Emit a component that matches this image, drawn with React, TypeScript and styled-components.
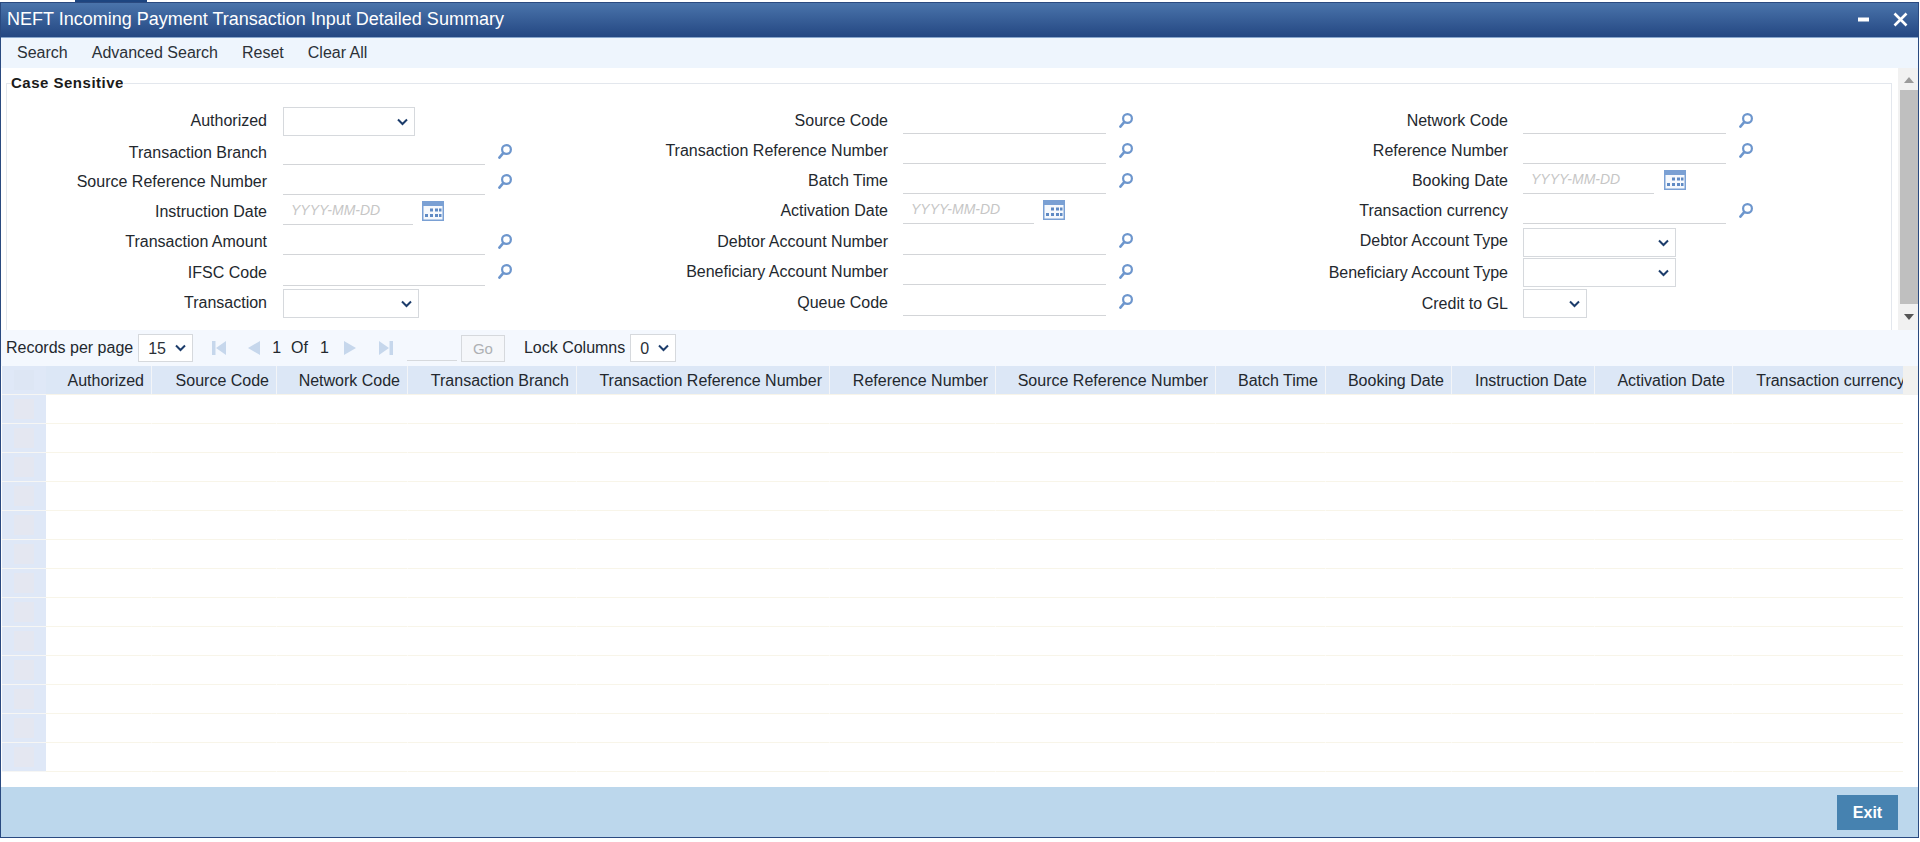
import React from "react";
import styled, { createGlobalStyle } from "styled-components";

const Global = createGlobalStyle`
  * { box-sizing: border-box; }
  html, body { margin: 0; padding: 0; background: #fff; overflow: hidden; }
  body { font-family: "Liberation Sans", Arial, sans-serif; font-size: 16px; color: #222; }
`;

const Page = styled.div`
  width: 1920px;
  height: 842px;
  display: flex;
  flex-direction: column;
`;
const TopStrip = styled.div`
  height: 2px;
  padding-left: 75px;
`;
const TopTab = styled.div`
  width: 72px;
  height: 3px;
  background: #1d4580;
`;
const Win = styled.div`
  width: 1919px;
  height: 836px;
  border: 1px solid #2a4a80;
  display: flex;
  flex-direction: column;
`;
const TitleBar = styled.div`
  height: 35px;
  flex: none;
  display: flex;
  align-items: center;
  padding: 0 10px 1px 6px;
  color: #fff;
  border-bottom: 1px solid #88a6cc;
  background: linear-gradient(#4a74ab, #244782);
`;
const Title = styled.div`
  flex: 1;
  font-size: 18px;
`;
const WinIcon = styled.svg`
  display: block;
  margin-left: 24px;
`;
const Toolbar = styled.div`
  height: 30px;
  flex: none;
  display: flex;
  align-items: center;
  gap: 24px;
  padding-left: 16px;
  background: #eef5fd;
`;
const ToolButton = styled.button`
  border: 0;
  padding: 0;
  background: none;
  font: 16px "Liberation Sans", Arial, sans-serif;
  color: #2b3138;
`;
const FormArea = styled.div`
  height: 262px;
  flex: none;
  display: flex;
  padding-left: 5px;
  background: #fff;
`;
const Fieldset = styled.fieldset`
  width: 1886px;
  min-width: 0;
  height: 256px;
  margin: 6px 0 0 0;
  padding: 0;
  border: 1px solid #e3e7ed;
  border-bottom: 0;
`;
const Legend = styled.legend`
  margin-left: 4px;
  padding: 0;
  font-size: 15px;
  font-weight: 700;
  line-height: 18px;
  letter-spacing: 0.5px;
  color: #1b1b1b;
`;
const Columns = styled.div`
  display: grid;
  grid-template-columns: repeat(3, 620px);
  padding-left: 10px;
`;
const Column = styled.div<{ $top: number }>`
  padding-top: ${(p) => p.$top}px;
`;
const Row = styled.div<{ $h: number }>`
  height: ${(p) => p.$h}px;
  display: flex;
  align-items: center;
`;
const Label = styled.label<{ $low?: boolean; $gap: number }>`
  width: ${(p) => 266 - p.$gap}px;
  flex: none;
  margin-right: ${(p) => p.$gap}px;
  text-align: right;
  color: #23282e;
  padding-top: ${(p) => (p.$low ? 4 : 0)}px;
`;
const TextField = styled.input<{ $w: number }>`
  width: ${(p) => p.$w}px;
  height: 29px;
  align-self: flex-end;
  flex: none;
  border: 0;
  border-bottom: 1px solid #d3d5d8;
  padding: 0 0 1px 8px;
  outline: 0;
  background: #fff;
  font: italic 14px "Liberation Sans", Arial, sans-serif;
  &::placeholder {
    color: #c6c6c6;
    opacity: 1;
  }
`;
const SelectWrap = styled.div<{ $w: number; $mb?: number }>`
  position: relative;
  width: ${(p) => p.$w}px;
  height: 29px;
  flex: none;
  align-self: flex-end;
  margin-bottom: ${(p) => p.$mb ?? 0}px;
`;
const NativeSelect = styled.select`
  width: 100%;
  height: 100%;
  appearance: none;
  background: #fff;
  border: 1px solid #d6d9dd;
  border-radius: 0;
  padding: 0 0 0 9px;
  font: 16px "Liberation Sans", Arial, sans-serif;
  color: #2a3037;
  outline: 0;
`;
const Chevron = styled.svg`
  position: absolute;
  right: 7px;
  top: 50%;
  margin-top: -4px;
  pointer-events: none;
`;
const Lookup = styled.svg`
  flex: none;
  margin: 2px 0 0 13px;
`;
const Calendar = styled.svg<{ $ml: number }>`
  flex: none;
  margin: 2px 0 0 ${(p) => p.$ml}px;
`;
const ScrollBar = styled.div`
  width: 20px;
  margin-left: 6px;
  background: #f1f1f1;
  display: flex;
  flex-direction: column;
  align-items: flex-end;
`;
const ScrollArrow = styled.svg`
  flex: none;
  width: 18px;
  height: 22px;
`;
const ScrollThumb = styled.div`
  width: 18px;
  height: 214px;
  background: #bfbfbf;
`;
const Pager = styled.div`
  height: 36px;
  flex: none;
  display: flex;
  align-items: center;
  padding-left: 5px;
  background: #f4f8fe;
  color: #23282e;
`;
const PagerText = styled.span<{ $ml?: number }>`
  margin-left: ${(p) => p.$ml ?? 0}px;
`;
const NavIcon = styled.svg<{ $ml: number }>`
  flex: none;
  margin-left: ${(p) => p.$ml}px;
`;
const PageInput = styled.input`
  width: 50px;
  height: 26px;
  margin: 0 0 0 14px;
  border: 0;
  border-bottom: 1px solid #d6d9dd;
  background: transparent;
  outline: 0;
`;
const GoButton = styled.button`
  width: 44px;
  height: 27px;
  margin-left: 4px;
  padding: 0;
  border: 1px solid #d6d9dd;
  background: #f5f7fa;
  color: #aeb0b3;
  font: 15px "Liberation Sans", Arial, sans-serif;
`;
const PagerSelect = styled.div<{ $w: number; $ml: number }>`
  position: relative;
  width: ${(p) => p.$w}px;
  height: 28px;
  flex: none;
  margin-left: ${(p) => p.$ml}px;
`;
const Table = styled.div`
  flex: 1;
  min-height: 0;
  background: #fff;
  padding-left: 1px;
`;
const HeadLine = styled.div`
  display: flex;
  height: 29px;
`;
const GridRow = styled.div`
  width: 1901px;
  flex: none;
  display: flex;
  overflow: hidden;
`;
const Track = styled.div`
  flex: 1;
  background: #f1f1ef;
`;
const Stub = styled.div<{ $head?: boolean }>`
  width: 44px;
  height: 29px;
  flex: none;
  display: flex;
  align-items: center;
  justify-content: center;
  background: #dfe8f7;
  border-bottom: 1px solid #f6f6f4;
  &::after {
    content: "";
    width: 20px;
    height: 20px;
    background: ${(p) => (p.$head ? "#dde6f4" : "#e4e7f1")};
  }
`;
const HeadCell = styled.div<{ $w: number }>`
  width: ${(p) => p.$w}px;
  height: 29px;
  flex: none;
  padding: 2px 7px 0 0;
  display: flex;
  align-items: center;
  justify-content: flex-end;
  white-space: nowrap;
  background: #dce7f6;
  border-right: 1px solid #f3f5f8;
  border-bottom: 1px solid #f7f4ea;
  color: #23282e;
`;
const BodyCell = styled.div<{ $w: number }>`
  width: ${(p) => p.$w}px;
  height: 29px;
  flex: none;
  border-right: 1px solid #fff;
  border-bottom: 1px solid #f8f5e9;
`;
const Footer = styled.div`
  height: 50px;
  flex: none;
  display: flex;
  justify-content: flex-end;
  padding: 8px 20px 0 0;
  background: #bcd7ec;
`;
const ExitButton = styled.button`
  width: 61px;
  height: 35px;
  padding: 0;
  border: 0;
  background: #4682b0;
  color: #fff;
  font: 700 16px "Liberation Sans", Arial, sans-serif;
`;

const ChevronIcon = () => (
  <Chevron width="11" height="8" viewBox="0 0 11 8">
    <path d="M1 1.5l4.5 4.5L10 1.5" fill="none" stroke="#1c3c6b" strokeWidth="2" />
  </Chevron>
);
const LookupIcon = () => (
  <Lookup width="14" height="15" viewBox="0 0 14 15">
    <circle cx="8.5" cy="5.5" r="4.4" fill="none" stroke="#6d96cd" strokeWidth="2.2" />
    <path d="M5.2 9.2L1.4 13.6" fill="none" stroke="#6d96cd" strokeWidth="2.6" strokeLinecap="round" />
  </Lookup>
);
const CalendarIcon = ({ ml }: { ml: number }) => (
  <Calendar $ml={ml} width="22" height="20" viewBox="0 0 22 20">
    <rect x="0" y="0" width="22" height="20" fill="#7aa0d4" />
    <rect x="1.5" y="5" width="19" height="13.5" fill="#f6f9fd" />
    <g fill="#5f8ac4">
      <rect x="8" y="7.5" width="3" height="3" />
      <rect x="13" y="7.5" width="3" height="3" />
      <rect x="17" y="7.5" width="2.5" height="3" />
      <rect x="3" y="13" width="3" height="3" />
      <rect x="8" y="13" width="3" height="3" />
      <rect x="13" y="13" width="3" height="3" />
      <rect x="17" y="13" width="2.5" height="3" />
    </g>
  </Calendar>
);

type Field = { label: string; kind: "lookup" | "date" | "select"; w?: number; mb?: number };

const col1: Field[] = [
  { label: "Authorized", kind: "select", w: 132 },
  { label: "Transaction Branch", kind: "lookup" },
  { label: "Source Reference Number", kind: "lookup" },
  { label: "Instruction Date", kind: "date" },
  { label: "Transaction Amount", kind: "lookup" },
  { label: "IFSC Code", kind: "lookup" },
  { label: "Transaction", kind: "select", w: 136, mb: 1 },
];
const col2: Field[] = [
  { label: "Source Code", kind: "lookup" },
  { label: "Transaction Reference Number", kind: "lookup" },
  { label: "Batch Time", kind: "lookup" },
  { label: "Activation Date", kind: "date" },
  { label: "Debtor Account Number", kind: "lookup" },
  { label: "Beneficiary Account Number", kind: "lookup" },
  { label: "Queue Code", kind: "lookup" },
];
const col3: Field[] = [
  { label: "Network Code", kind: "lookup" },
  { label: "Reference Number", kind: "lookup" },
  { label: "Booking Date", kind: "date" },
  { label: "Transaction currency", kind: "lookup" },
  { label: "Debtor Account Type", kind: "select", w: 153, mb: 1 },
  { label: "Beneficiary Account Type", kind: "select", w: 153, mb: 1 },
  { label: "Credit to GL", kind: "select", w: 64, mb: 1 },
];

const formColumns = [
  { top: 13, gap: 16, input: 202, date: 130, calGap: 9, fields: col1, heights: [31, 29, 30, 30, 30, 31, 33] },
  { top: 12, gap: 15, input: 203, date: 131, calGap: 9, fields: col2, heights: [30, 30, 30, 30, 31, 30, 31] },
  { top: 12, gap: 15, input: 203, date: 131, calGap: 10, fields: col3, heights: [30, 30, 30, 30, 34, 30, 31] },
];

const gridColumns: [string, number][] = [
  ["Authorized", 106],
  ["Source Code", 125],
  ["Network Code", 131],
  ["Transaction Branch", 169],
  ["Transaction Reference Number", 253],
  ["Reference Number", 166],
  ["Source Reference Number", 220],
  ["Batch Time", 110],
  ["Booking Date", 126],
  ["Instruction Date", 143],
  ["Activation Date", 138],
  ["Transaction currency", 180],
];

type FieldProps = { f: Field; h: number; gap: number; input: number; date: number; calGap: number };

const FormField = ({ f, h, gap, input, date, calGap }: FieldProps) => (
  <Row $h={h}>
    <Label $low={f.kind !== "select"} $gap={gap}>
      {f.label}
    </Label>
    {f.kind === "select" && (
      <SelectWrap $w={f.w ?? 132} $mb={f.mb}>
        <NativeSelect aria-label={f.label}>
          <option></option>
        </NativeSelect>
        <ChevronIcon />
      </SelectWrap>
    )}
    {f.kind === "lookup" && (
      <>
        <TextField $w={input} aria-label={f.label} />
        <LookupIcon />
      </>
    )}
    {f.kind === "date" && (
      <>
        <TextField $w={date} placeholder="YYYY-MM-DD" aria-label={f.label} />
        <CalendarIcon ml={calGap} />
      </>
    )}
  </Row>
);

const navFill = "#c6d7ec";

export default function App() {
  return (
    <Page>
      <Global />
      <TopStrip>
        <TopTab />
      </TopStrip>
      <Win>
        <TitleBar>
          <Title>NEFT Incoming Payment Transaction Input Detailed Summary</Title>
          <WinIcon width="11" height="5" viewBox="0 0 11 5">
            <rect width="11" height="4" y="0.5" fill="#fff" />
          </WinIcon>
          <WinIcon width="15" height="15" viewBox="0 0 15 15">
            <path d="M1.5 1.5l12 12M13.5 1.5l-12 12" stroke="#fff" strokeWidth="2.6" fill="none" />
          </WinIcon>
        </TitleBar>
        <Toolbar>
          <ToolButton>Search</ToolButton>
          <ToolButton>Advanced Search</ToolButton>
          <ToolButton>Reset</ToolButton>
          <ToolButton>Clear All</ToolButton>
        </Toolbar>
        <FormArea>
          <Fieldset>
            <Legend>Case Sensitive</Legend>
            <Columns>
              {formColumns.map((c, i) => (
                <Column key={i} $top={c.top}>
                  {c.fields.map((f, j) => (
                    <FormField
                      key={f.label}
                      f={f}
                      h={c.heights[j]}
                      gap={c.gap}
                      input={c.input}
                      date={c.date}
                      calGap={c.calGap}
                    />
                  ))}
                </Column>
              ))}
            </Columns>
          </Fieldset>
          <ScrollBar>
            <ScrollArrow viewBox="0 0 18 22">
              <path d="M4 15l5-6 5 6z" fill="#9a9a9a" />
            </ScrollArrow>
            <ScrollThumb />
            <ScrollArrow viewBox="0 0 18 22">
              <path d="M4 10l5 6 5-6z" fill="#555" />
            </ScrollArrow>
          </ScrollBar>
        </FormArea>
        <Pager>
          <PagerText>Records per page</PagerText>
          <PagerSelect $w={55} $ml={5}>
            <NativeSelect aria-label="Records per page">
              <option>15</option>
            </NativeSelect>
            <ChevronIcon />
          </PagerSelect>
          <NavIcon $ml={19} width="14" height="14" viewBox="0 0 14 14">
            <path d="M0 0h3.5v14H0zM14 0v14L4 7z" fill={navFill} />
          </NavIcon>
          <NavIcon $ml={22} width="12" height="14" viewBox="0 0 12 14">
            <path d="M12 0v14L0 7z" fill={navFill} />
          </NavIcon>
          <PagerText $ml={12}>1</PagerText>
          <PagerText $ml={10}>Of</PagerText>
          <PagerText $ml={12}>1</PagerText>
          <NavIcon $ml={15} width="12" height="14" viewBox="0 0 12 14">
            <path d="M0 0v14L12 7z" fill={navFill} />
          </NavIcon>
          <NavIcon $ml={23} width="14" height="14" viewBox="0 0 14 14">
            <path d="M14 0h-3.5v14H14zM0 0v14L10 7z" fill={navFill} />
          </NavIcon>
          <PageInput aria-label="Page" />
          <GoButton>Go</GoButton>
          <PagerText $ml={19}>Lock Columns</PagerText>
          <PagerSelect $w={46} $ml={5}>
            <NativeSelect aria-label="Lock Columns">
              <option>0</option>
            </NativeSelect>
            <ChevronIcon />
          </PagerSelect>
        </Pager>
        <Table>
          <HeadLine>
            <GridRow>
              <Stub $head />
              {gridColumns.map(([name, w]) => (
                <HeadCell key={name} $w={w}>
                  {name}
                </HeadCell>
              ))}
            </GridRow>
            <Track />
          </HeadLine>
          {Array.from({ length: 13 }, (_, i) => (
            <GridRow key={i}>
              <Stub />
              {gridColumns.map(([name, w]) => (
                <BodyCell key={name} $w={w} />
              ))}
            </GridRow>
          ))}
        </Table>
        <Footer>
          <ExitButton>Exit</ExitButton>
        </Footer>
      </Win>
    </Page>
  );
}
